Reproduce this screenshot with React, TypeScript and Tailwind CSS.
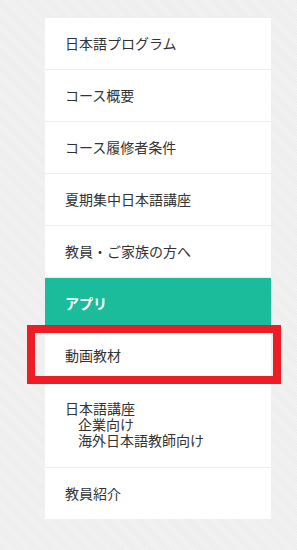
const items = [
  "日本語プログラム",
  "コース概要",
  "コース履修者条件",
  "夏期集中日本語講座",
  "教員・ご家族の方へ",
];

export default function App() {
  return (
    <div
      className="min-h-[550px] w-[297px] bg-[#f0f0f0] bg-[repeating-linear-gradient(45deg,#ededed_0px,#ededed_1px,#f2f2f2_1px,#f2f2f2_2px)] pt-[18px] text-[14px] text-[#333]"
      style={{ fontFamily: '"Noto Sans CJK JP", "Noto Sans", sans-serif' }}
    >
      <ul className="ml-[45px] w-[226px] bg-white">
        {items.map((t) => (
          <li key={t} className="border-b border-[#eeeeee] px-5 py-[18px] leading-[15px]">
            {t}
          </li>
        ))}
        <li className="border-b border-[#eeeeee] bg-[#1bbc9b] px-5 py-[18px] font-bold leading-[15px] text-white">
          アプリ
        </li>
        <li className="relative border-b border-[#eeeeee] px-5 py-[18px] leading-[15px]">
          動画教材
          <div className="absolute -top-[5px] -bottom-[3px] -left-[18px] -right-[10px] border-[8px] border-[#ee1c25]" />
        </li>
        <li className="border-b border-[#eeeeee] px-5 pt-[18px] pb-[19px] leading-[16px]">
          <div>日本語講座</div>
          <div className="pl-[13px]">企業向け</div>
          <div className="pl-[13px]">海外日本語教師向け</div>
        </li>
        <li className="px-5 py-[18px] leading-[15px]">教員紹介</li>
      </ul>
    </div>
  );
}
